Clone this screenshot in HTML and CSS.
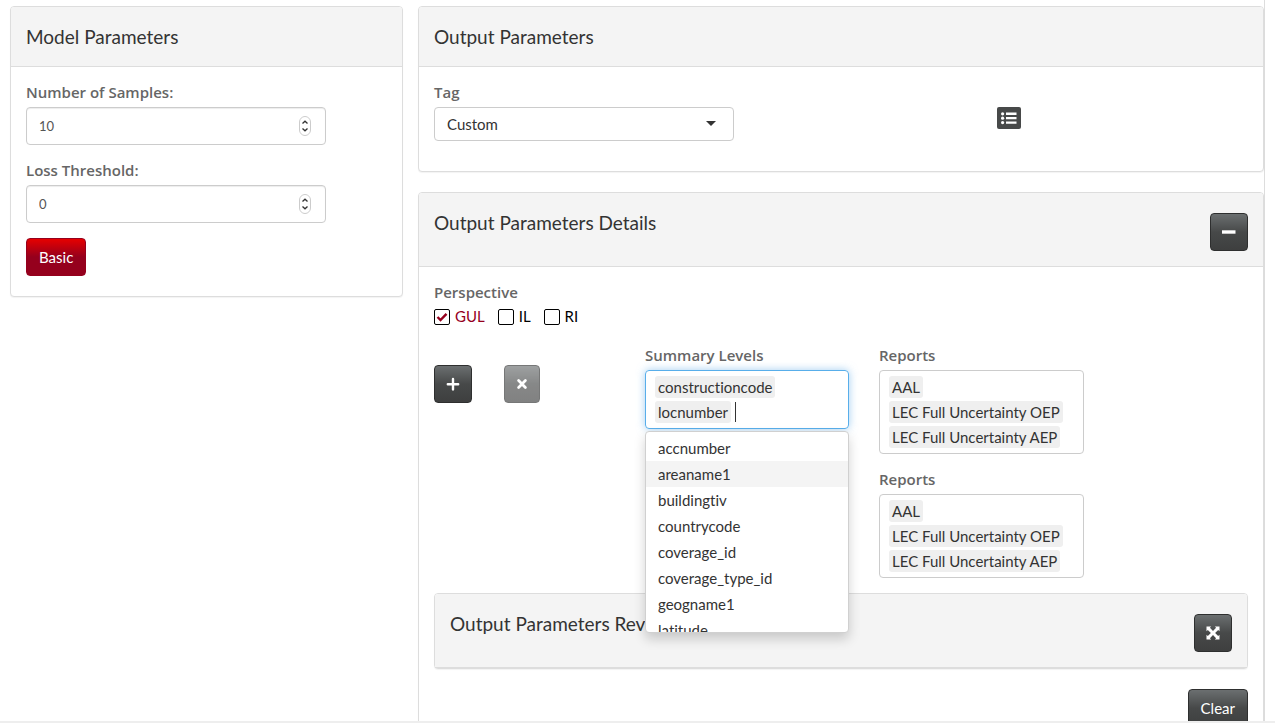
FILE: index.html
```html
<!DOCTYPE html>
<html lang="en">
<head>
<meta charset="utf-8">
<title>Model and Output Parameters</title>
<link rel="stylesheet" href="styles.css">
</head>
<body>
<main class="page">
  <div class="columns">
    <section class="panel">
      <header class="panel-heading"><h2 class="title">Model Parameters</h2></header>
      <div class="panel-body panel-body-tall">
        <div class="field">
          <label class="label" for="samples">Number of Samples:</label>
          <div class="number-wrap">
            <input class="number" id="samples" type="number" value="10">
            <svg class="spinner" viewBox="0 0 12 20" aria-hidden="true"><rect x=".5" y=".5" width="11" height="19" rx="5.5"/><path d="M3.5 7.500 6 5.200l2.500 2.300M3.500 12.500 6 14.800l2.500-2.300"/></svg>
          </div>
        </div>
        <div class="field">
          <label class="label" for="threshold">Loss Threshold:</label>
          <div class="number-wrap">
            <input class="number" id="threshold" type="number" value="0">
            <svg class="spinner" viewBox="0 0 12 20" aria-hidden="true"><rect x=".5" y=".5" width="11" height="19" rx="5.5"/><path d="M3.5 7.500 6 5.200l2.500 2.300M3.500 12.500 6 14.800l2.500-2.300"/></svg>
          </div>
        </div>
        <button class="btn btn-red" type="button">Basic</button>
      </div>
    </section>

    <div class="stack">
      <section class="panel">
        <header class="panel-heading"><h2 class="title">Output Parameters</h2></header>
        <div class="panel-body tag-row">
          <div class="field">
            <label class="label" for="tag">Tag</label>
            <div class="select-wrap">
              <select class="select" id="tag"><option>Custom</option></select>
            </div>
          </div>
          <button class="list-btn" type="button" aria-label="Show list">
            <svg class="list-icon" viewBox="0 0 24 22"><rect width="24" height="22" rx="2" fill="#474949"/><g fill="#fff"><circle cx="5.6" cy="6.8" r="1.6"/><circle cx="5.6" cy="11.2" r="1.6"/><circle cx="5.6" cy="15.6" r="1.6"/><path d="M9 5.6h10.5v2.3H9zM9 10h10.5v2.3H9zM9 14.4h10.5v2.3H9z"/></g></svg>
          </button>
        </div>
      </section>

      <section class="panel">
        <header class="panel-heading panel-heading-tools">
          <h2 class="title">Output Parameters Details</h2>
          <button class="btn btn-icon" type="button" aria-label="Collapse"><svg class="icon" viewBox="0 0 14 14"><path fill="#fff" d="M0 5.300h13.500v3.400H0z"/></svg></button>
        </header>
        <div class="panel-body">
          <fieldset class="perspective">
            <legend class="label">Perspective</legend>
            <div class="checks">
              <label class="check"><input class="check-input" type="checkbox" checked><svg class="tick" viewBox="0 0 12 12" aria-hidden="true"><path d="M1.5 6 4.5 9l6-6.2"/></svg><span class="check-text">GUL</span></label>
              <label class="check"><input class="check-input" type="checkbox"><span class="check-text">IL</span></label>
              <label class="check"><input class="check-input" type="checkbox"><span class="check-text">RI</span></label>
            </div>
          </fieldset>

          <div class="levels">
            <div class="row-actions">
              <button class="btn btn-icon" type="button" aria-label="Add"><svg class="icon" viewBox="0 0 14 14"><path fill="none" stroke="#fff" stroke-width="2.4" stroke-linecap="round" d="M7 2v10.400M1.800 7.200h10.400"/></svg></button>
              <button class="btn btn-icon btn-remove" type="button" aria-label="Remove" disabled><svg class="icon" viewBox="0 0 14 14"><path fill="none" stroke="#fff" stroke-width="2.800" stroke-linecap="round" d="m3.600 3.600 6.800 6.800M10.400 3.600l-6.800 6.800"/></svg></button>
            </div>

            <div class="picker">
              <label class="label" for="levels">Summary Levels</label>
              <div class="tags tags-focus">
                <span class="tag">constructioncode</span>
                <div class="tag-line"><span class="tag">locnumber</span><input class="tag-input" id="levels" type="text"></div>
              </div>
              <ul class="menu" role="listbox" aria-label="Summary Levels">
                <li class="option" role="option">accnumber</li>
                <li class="option option-active" role="option" aria-selected="true">areaname1</li>
                <li class="option" role="option">buildingtiv</li>
                <li class="option" role="option">countrycode</li>
                <li class="option" role="option">coverage_id</li>
                <li class="option" role="option">coverage_type_id</li>
                <li class="option" role="option">geogname1</li>
                <li class="option" role="option">latitude</li>
              </ul>
            </div>

            <div class="reports">
              <div>
                <span class="label">Reports</span>
                <div class="tags"><span class="tag">AAL</span><span class="tag">LEC Full Uncertainty OEP</span><span class="tag">LEC Full Uncertainty AEP</span></div>
              </div>
              <div>
                <span class="label">Reports</span>
                <div class="tags"><span class="tag">AAL</span><span class="tag">LEC Full Uncertainty OEP</span><span class="tag">LEC Full Uncertainty AEP</span></div>
              </div>
            </div>
          </div>

          <section class="panel">
            <header class="panel-heading panel-heading-tools">
              <h2 class="title">Output Parameters Review</h2>
              <button class="btn btn-icon" type="button" aria-label="Expand"><svg class="icon" viewBox="0 0 14 14"><path fill="#fff" d="M.5.5h4.700L3.900 1.800 7 4.900l3.100-3.100L8.800.5h4.700v4.700l-1.300-1.300L9.100 7l3.100 3.100 1.300-1.300v4.700H8.800l1.300-1.300L7 9.100l-3.100 3.100 1.300 1.300H.5V8.800l1.300 1.300L4.900 7 1.800 3.900.5 5.200z"/></svg></button>
            </header>
          </section>
          <div class="footer-actions"><button class="btn" type="button">Clear</button></div>
        </div>
      </section>
    </div>
  </div>
</main>
</body>
</html>
```

FILE: styles.css
```css
* { box-sizing: border-box; }

body {
  margin: 0;
  background: #fff;
  color: #333;
  font: 15px/20px Lato, "Open Sans", sans-serif;
  font-variant-ligatures: none;
}

button, input, select { font: inherit; }

.page {
  height: calc(100vh - 3px);
  overflow: hidden;
  border-bottom: 2px solid #eee;
}

.columns {
  display: grid;
  grid-template-columns: 393fr 846fr;
  align-items: start;
  gap: 15px;
  min-height: 100%;
  margin-right: 10px;
  padding: 6px 0 20px 10px;
  border-right: 1px solid #ddd;
}

.stack { display: grid; gap: 20px; }

.panel {
  background: #fff;
  border: 1px solid #ddd;
  border-radius: 4px;
  box-shadow: 0 1px 1px rgba(0, 0, 0, .05);
}

.panel-heading {
  padding: 20px 15px 19px;
  background: #f4f4f4;
  border-bottom: 1px solid #ddd;
  border-radius: 3px 3px 0 0;
}

.panel-heading-tools {
  display: flex;
  align-items: flex-start;
  justify-content: space-between;
  padding-bottom: 15px;
}

.title {
  margin: 0;
  font-size: 19px;
  font-weight: 400;
  line-height: 20px;
}

.panel-body { padding: 15px; }
.panel-body-tall { padding-bottom: 20px; }

.field { width: 300px; margin-bottom: 15px; }

.label {
  display: block;
  margin-bottom: 5px;
  padding: 0;
  color: #666;
  font-family: "Open Sans", Lato, sans-serif;
  font-weight: 600;
}

.number-wrap, .select-wrap { position: relative; }

.number {
  display: block;
  width: 100%;
  height: 38px;
  padding: 8px 12px;
  border: 1px solid #ccc;
  border-radius: 4px;
  box-shadow: inset 0 1px 1px rgba(0, 0, 0, .075);
  color: #555;
  font-size: 13px;
  appearance: textfield;
}

.number::-webkit-inner-spin-button { appearance: none; }

.spinner {
  position: absolute;
  top: 9px;
  right: 15px;
  width: 12px;
  height: 20px;
  fill: #fff;
  stroke: #ccc;
}

.spinner path { fill: none; stroke: #333; stroke-width: 1.3; }

.tag-row {
  display: grid;
  grid-template-columns: 563fr 251fr;
  align-items: start;
}

.select {
  display: block;
  width: 100%;
  height: 34px;
  padding: 0 12px;
  border: 1px solid #ccc;
  border-radius: 4px;
  background: #fff;
  color: #333;
  appearance: none;
}

.select-wrap::after {
  content: "";
  position: absolute;
  top: 14px;
  right: 18px;
  border: 5px solid transparent;
  border-top-color: #333;
  border-bottom: 0;
}

.list-btn {
  justify-self: start;
  margin: 25px 0 0;
  padding: 0;
  border: 0;
  background: none;
}

.list-icon { display: block; width: 24px; height: 22px; }

.btn {
  height: 38px;
  padding: 0 12px;
  border: 1px solid #2e2f2f;
  border-radius: 4px;
  background: linear-gradient(#6b6f70, #474949 50%, #3e3f3f);
  color: #fff;
}

.btn-red {
  border-color: #95001d;
  background: linear-gradient(#e60000, #95001d 50%);
}

.btn-icon {
  display: grid;
  place-items: center;
  width: 38px;
  padding: 0;
}

.btn-remove { width: 36px; opacity: .65; }

.icon { width: 14px; height: 14px; }

.perspective {
  margin: 0 0 20px;
  padding: 0;
  border: 0;
}

.checks { display: flex; gap: 13px; }

.check {
  display: flex;
  position: relative;
  gap: 5px;
  color: #000;
}

.check-input {
  width: 16px;
  height: 16px;
  margin: 2px 0 0;
  border: 1px solid #000;
  border-radius: 2px;
  appearance: none;
}

.check-text { line-height: 18px; }
.check-input:checked ~ .check-text { color: #95001d; }

.tick {
  position: absolute;
  top: 4px;
  left: 2px;
  width: 12px;
  height: 12px;
  fill: none;
  stroke: #95001d;
  stroke-width: 2.4;
}

.levels {
  display: grid;
  grid-template-columns: 181fr 204fr 205fr 134fr;
  gap: 30px;
  margin-bottom: 15px;
}

.row-actions {
  display: flex;
  align-items: flex-start;
  gap: 32px;
  padding-top: 20px;
}

.picker { position: relative; }
.reports { display: grid; gap: 15px; }

.tags {
  display: flex;
  flex-direction: column;
  align-items: flex-start;
  gap: 3px;
  padding: 5px 9px;
  border: 1px solid #ccc;
  border-radius: 4px;
}

.tags-focus {
  border-color: #58aeea;
  box-shadow: 0 0 8px rgba(102, 175, 233, .6);
}

.tag {
  padding: 1px 3px;
  border-radius: 3px;
  background: #efefef;
  white-space: nowrap;
}

.tag-line { display: flex; gap: 4px; }

.tag-input {
  width: 40px;
  height: 20px;
  margin-top: 1px;
  padding: 0;
  border: 0;
  border-left: 1px solid #333;
  outline: 0;
}

.menu {
  position: absolute;
  top: 86px;
  left: 0;
  z-index: 1;
  width: 100%;
  height: 202px;
  margin: 0;
  padding: 3px 0;
  overflow: hidden;
  list-style: none;
  background: #fff;
  border: 1px solid #d0d0d0;
  border-radius: 4px;
  box-shadow: 0 6px 12px rgba(0, 0, 0, .18);
}

.option { padding: 3px 12px; }
.option-active { background: #f4f4f4; }

.footer-actions {
  display: flex;
  justify-content: flex-end;
  margin-top: 20px;
}
```
